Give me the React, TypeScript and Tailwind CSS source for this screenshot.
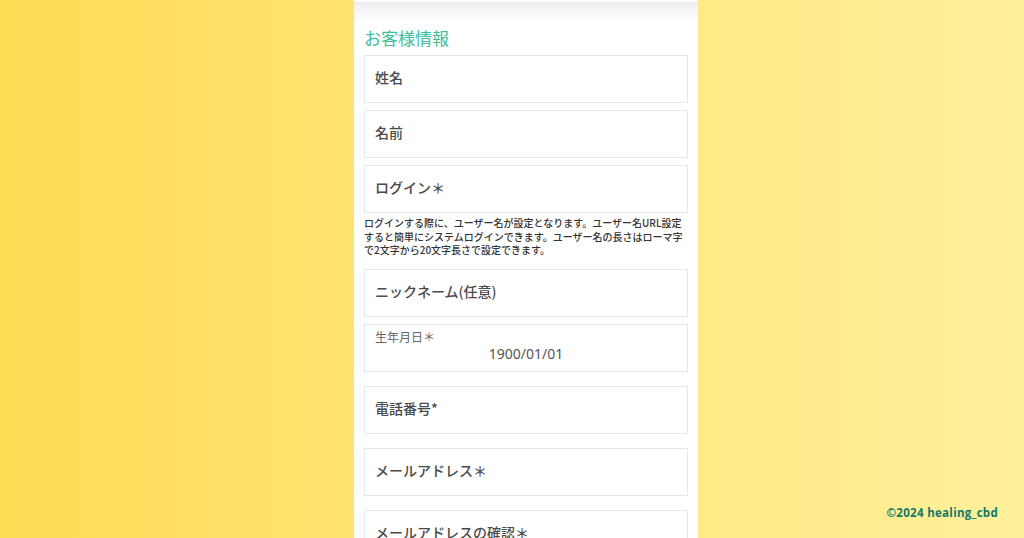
import { ReactNode } from 'react'

const jp = { fontFamily: '"Noto Sans CJK JP", "Noto Sans", sans-serif' }

function Field({ children }: { children: ReactNode }) {
  return (
    <div className="h-[48px] shrink-0 border border-[#e3e8ec] bg-white px-[10px] pb-[3px] flex items-center">
      {children}
    </div>
  )
}

function Label({ children }: { children: ReactNode }) {
  return <span className="text-[14px] font-medium text-[#4a4a4a]">{children}</span>
}

export default function App() {
  return (
    <div
      className="relative w-full h-[538px] overflow-hidden flex justify-center bg-gradient-to-r from-[#ffdc55] to-[#fff09b]"
      style={jp}
    >
      {/* center column */}
      <div className="w-[344px] ml-[28px] bg-white flex flex-col">
        {/* bottom edge of the card above, with its shadow */}
        <div className="h-[3px] shrink-0 bg-white border-b border-[#e8e8e8]" />
        <div className="h-[20px] shrink-0 bg-gradient-to-b from-[#efefef] to-white" />
        <div className="shrink-0 px-[10px] pt-[3px] flex flex-col">
          <h2 className="text-[17px] leading-[24px] text-[#3ebd9c] mb-[5px]">お客様情報</h2>

          <div className="flex flex-col gap-[7px]">
            <Field>
              <Label>姓名</Label>
            </Field>
            <Field>
              <Label>名前</Label>
            </Field>
            <Field>
              <Label>ログイン＊</Label>
            </Field>
          </div>

          <p className="mt-[3px] text-[10px] leading-[13.5px] font-medium text-[#333]">
            ログインする際に、ユーザー名が設定となります。ユーザー名URL設定すると簡単にシステムログインできます。ユーザー名の長さはローマ字で2文字から20文字長さで設定できます。
          </p>

          <div className="mt-[12px]">
            <Field>
              <Label>ニックネーム(任意)</Label>
            </Field>
          </div>

          <div className="mt-[7px] h-[48px] shrink-0 border border-[#e3e8ec] bg-white px-[10px] pt-[4px] flex flex-col">
            <span className="text-[12px] leading-[16px] text-[#666]">生年月日＊</span>
            <span
              className="text-center text-[14px] leading-[18px] text-[#555]"
              style={{ fontFamily: '"Noto Sans", sans-serif' }}
            >
              1900/01/01
            </span>
          </div>

          <div className="mt-[14px] flex flex-col gap-[14px]">
            <Field>
              <Label>電話番号*</Label>
            </Field>
            <Field>
              <Label>メールアドレス＊</Label>
            </Field>
            <Field>
              <Label>メールアドレスの確認＊</Label>
            </Field>
          </div>
        </div>
      </div>

      <div
        className="absolute right-[26px] bottom-[17px] text-[11.5px] font-bold tracking-[0.3px] text-[#11796a]"
        style={{ fontFamily: '"Open Sans", sans-serif' }}
      >
        ©2024 healing_cbd
      </div>
    </div>
  )
}
